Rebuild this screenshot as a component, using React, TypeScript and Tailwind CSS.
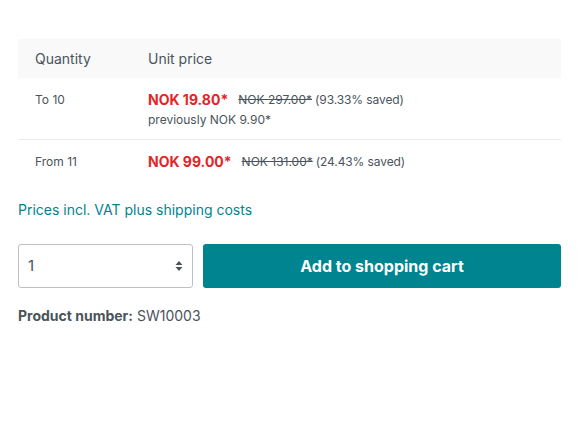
import React from 'react';

const tiers = [
  { label: 'To 10', price: 'NOK 19.80*', list: 'NOK 297.00*', saved: '(93.33% saved)', note: 'previously NOK 9.90*' },
  { label: 'From 11', price: 'NOK 99.00*', list: 'NOK 131.00*', saved: '(24.43% saved)', note: '' },
];

const App: React.FC = () => {
  return (
    <div className="min-h-screen bg-white text-[#4a545b]" style={{ fontFamily: 'Inter, "Noto Sans", sans-serif' }}>
      <div className="pl-[18px] pr-[27px] pt-[39px]">
        {/* Price table */}
        <div>
          <div className="grid grid-cols-[130px_1fr] bg-[#f9f9f9] h-[39px] items-center text-[14px]">
            <div className="pl-[17px]">Quantity</div>
            <div>Unit price</div>
          </div>
          {tiers.map((t, i) => (
            <div
              key={t.label}
              className={`grid grid-cols-[130px_1fr] pt-[11px] text-[12px] ${i === 0 ? 'pb-[9px] border-b border-[#e9ecef]' : 'pb-[10px]'}`}
            >
              <div className="pl-[17px] h-[21px] flex items-center">{t.label}</div>
              <div>
                <div className="h-[21px] flex items-center">
                  <span className="text-[14px] font-bold text-[#e52427] mr-[10px]">{t.price}</span>
                  <span className="line-through mr-[3px]">{t.list}</span>
                  <span className="tracking-[-0.1px]">{t.saved}</span>
                </div>
                {t.note && <div className="h-[20px] flex items-center">{t.note}</div>}
              </div>
            </div>
          ))}
        </div>

        <div className="mt-[17px] text-[14px] leading-[21px] text-[#008490]">Prices incl. VAT plus shipping costs</div>

        {/* Buy form */}
        <div className="mt-[24px] flex gap-[10px]">
          <div className="relative w-[175px] h-[44px] border border-[#bcc1c7] rounded-[3px] flex items-center pl-[9px] text-[15px]">
            <span>1</span>
            <svg className="absolute right-[9px] top-1/2 -translate-y-1/2" width="8" height="12" viewBox="0 0 8 12">
              <path d="M4 1 L7.5 5 H0.5 Z" fill="#4a545b" />
              <path d="M4 11 L7.5 7 H0.5 Z" fill="#4a545b" />
            </svg>
          </div>
          <button className="flex-1 h-[44px] rounded-[3px] bg-[#008490] text-white font-bold text-[16px]">
            Add to shopping cart
          </button>
        </div>

        <div className="mt-[17px] text-[14px] leading-[21px]">
          <span className="font-bold">Product number:</span> SW10003
        </div>
      </div>
    </div>
  );
};

export default App;
